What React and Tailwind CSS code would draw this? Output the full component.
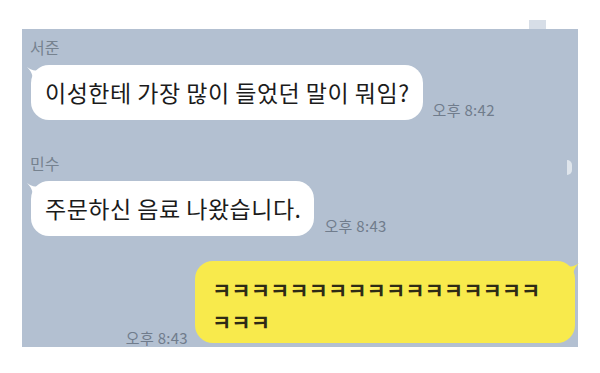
const font = { fontFamily: '"Noto Sans CJK KR", "Noto Sans", sans-serif' };

function LeftTail() {
  return (
    <svg className="absolute -left-[4px] top-[2px]" width="14" height="14" viewBox="0 0 14 14">
      <path d="M0 0 C4 3 8 4 14 4 L14 14 L6 14 C6 8 4 4 0 0 Z" fill="#ffffff" />
    </svg>
  );
}

function RightTail() {
  return (
    <svg className="absolute -right-[4px] top-[2px]" width="14" height="14" viewBox="0 0 14 14">
      <path d="M14 0 C10 3 6 4 0 4 L0 14 L8 14 C8 8 10 4 14 0 Z" fill="#f8ea4c" />
    </svg>
  );
}

function Received({ name, text, time, nameGap }) {
  return (
    <div className={nameGap}>
      <div className="pl-[8px] h-[20px] text-[16px] leading-[20px] text-[#76828f]">{name}</div>
      <div className="mt-[8px] pl-[9px] flex items-end">
        <div className="relative">
          <LeftTail />
          <div className="relative bg-white rounded-[18px] h-[55px] pl-[14px] pr-[13px] flex items-center text-[23px] text-[#1b1b1b] tracking-[0.5px]">
            {text}
          </div>
        </div>
        <div className="ml-[10px] mb-[1px] text-[15px] leading-[18px] text-[#707c8c] tracking-[0.3px]">{time}</div>
      </div>
    </div>
  );
}

export default function App() {
  return (
    <div className="w-[600px] h-[373px] bg-white relative overflow-hidden" style={font}>
      <div className="absolute left-[529px] top-[20px] w-[17px] h-[15px] bg-[#d7dee7]" />
      <div className="ml-[22px] pt-[29px]">
        <div className="w-[556px] h-[318px] bg-[#b3c0d1] relative">
          <div className="absolute right-[6px] top-[131px] w-[5px] h-[15px] rounded-r-full bg-[#dfe5ec]" />
          <Received name="서준" text="이성한테 가장 많이 들었던 말이 뭐임?" time="오후 8:42" nameGap="pt-[8px]" />
          <Received name="민수" text="주문하신 음료 나왔습니다." time="오후 8:43" nameGap="mt-[33px]" />
          <div className="mt-[25px] flex items-end justify-end pr-[3px]">
            <div className="mr-[7px] mb-[-4px] text-[15px] leading-[18px] text-[#707c8c] tracking-[0.3px]">오후 8:43</div>
            <div className="relative">
              <RightTail />
              <div className="relative bg-[#f8ea4c] rounded-[18px] w-[380px] h-[82px] pl-[17px] pt-[12px] text-[21px] leading-[32px] text-[#2e2b16] font-semibold">
                ㅋㅋㅋㅋㅋㅋㅋㅋㅋㅋㅋㅋㅋㅋㅋㅋㅋ
                <br />
                ㅋㅋㅋ
              </div>
            </div>
          </div>
        </div>
      </div>
    </div>
  );
}
